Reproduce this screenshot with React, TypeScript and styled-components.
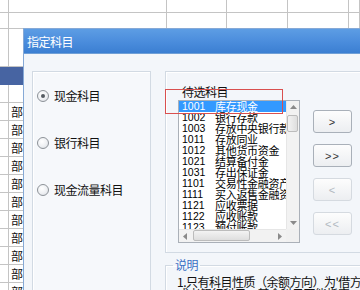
import React from "react";
import styled, { createGlobalStyle } from "styled-components";

const GlobalStyle = createGlobalStyle`
  html, body { margin: 0; padding: 0; background: #fff; }
  body {
    width: 360px; height: 290px; overflow: hidden;
    font-family: "Noto Sans CJK SC", "Liberation Sans", sans-serif;
  }
`;

const CJK = `"Noto Sans CJK SC", "Liberation Sans", sans-serif`;

const Screen = styled.div`
  position: relative;
  width: 360px;
  height: 290px;
  overflow: hidden;
  background: #fff;
`;

/* ---------- spreadsheet behind the dialog ---------- */
const Sheet = styled.div`
  display: flex;
  flex-direction: column;
`;

const HeaderRow = styled.div<{ $h: number }>`
  display: grid;
  grid-template-columns: 9px 158px 60px 61px 61px 1fr;
  height: ${(p) => p.$h}px;
`;

const GridCell = styled.div`
  box-sizing: border-box;
  border-right: 1px solid #c4c4c4;
  border-bottom: 1px solid #c4c4c4;
`;

const SideRow = styled.div<{ $h: number; $selected?: boolean }>`
  display: grid;
  grid-template-columns: 9px 15px;
  height: ${(p) => p.$h}px;
  background: ${(p) => (p.$selected ? "#4764a2" : "#fff")};
`;

const SideCell = styled.div<{ $selected?: boolean }>`
  box-sizing: border-box;
  border-right: 1px solid ${(p) => (p.$selected ? "#4764a2" : "#c4c4c4")};
  border-bottom: 1px solid ${(p) => (p.$selected ? "#4764a2" : "#c4c4c4")};
  font: 12px/17px ${CJK};
  color: #111;
  padding-left: 2px;
  overflow: hidden;
  white-space: nowrap;
`;

/* ---------- dialog ---------- */
const Dialog = styled.div`
  position: absolute;
  left: 23px;
  top: 28px;
  width: 380px;
  height: 300px;
  box-sizing: border-box;
  border: 1px solid #86a9d6;
  background: #f3f6fa;
  display: flex;
  flex-direction: column;
`;

const TitleBar = styled.div`
  height: 24px;
  flex: none;
  display: flex;
  align-items: center;
  padding-left: 3px;
  background: linear-gradient(#5d9de4 0%, #4a8cdc 55%, #3b7fd2 100%);
  color: #fff;
  font: 12px ${CJK};
  letter-spacing: -0.5px;
  border-bottom: 1px solid #6f9fd6;
`;

const Body = styled.div`
  flex: 1;
  display: flex;
  gap: 14px;
  padding: 17px 0 0 8px;
`;

const LeftGroup = styled.div`
  width: 119px;
  flex: none;
  box-sizing: border-box;
  border: 1px solid #d2dae3;
  box-shadow: inset 1px 1px 0 #fff;
  background: #f6f8fb;
  display: flex;
  flex-direction: column;
  gap: 33px;
  padding: 17px 0 0 4px;
`;

const RadioRow = styled.label`
  display: flex;
  align-items: center;
  gap: 5px;
  height: 14px;
  font: 12px/14px ${CJK};
  letter-spacing: -0.5px;
  color: #111;
  white-space: nowrap;
`;

const RadioCircle = styled.span<{ $checked?: boolean }>`
  position: relative;
  width: 12px;
  height: 12px;
  box-sizing: border-box;
  border-radius: 50%;
  border: 1px solid #8d9298;
  background: radial-gradient(circle at 40% 35%, #ffffff 0%, #eef0f3 55%, #d6dadf 100%);
  flex: none;
  &::after {
    content: "";
    display: ${(p) => (p.$checked ? "block" : "none")};
    position: absolute;
    left: 3px;
    top: 3px;
    width: 4px;
    height: 4px;
    border-radius: 50%;
    background: #555b62;
  }
`;

const RightColumn = styled.div`
  flex: 1;
  display: flex;
  flex-direction: column;
`;

const RightGroup = styled.div`
  position: relative;
  height: 182px;
  flex: none;
  box-sizing: border-box;
  border: 1px solid #d2dae3;
  box-shadow: inset 1px 1px 0 #fff;
  display: flex;
  padding: 13px 0 0 12px;
`;

const Highlight = styled.div`
  position: absolute;
  left: -1px;
  top: 17px;
  width: 118px;
  height: 25px;
  box-sizing: border-box;
  border: 1.5px solid #d9504f;
  pointer-events: none;
`;

const ListArea = styled.div`
  display: flex;
  flex-direction: column;
  width: 122px;
  flex: none;
`;

const ListLabel = styled.div`
  font: 12px/14px ${CJK};
  letter-spacing: -0.5px;
  color: #111;
  padding-left: 4px;
  margin-bottom: 1px;
`;

const Listbox = styled.div`
  width: 122px;
  height: 143px;
  box-sizing: border-box;
  border: 1px solid #aab0b8;
  background: #fff;
  display: grid;
  grid-template-columns: 1fr 13px;
  grid-template-rows: 1fr 13px;
`;

const Rows = styled.div`
  overflow: hidden;
`;

const Row = styled.div<{ $selected?: boolean }>`
  display: flex;
  height: 11px;
  line-height: 11px;
  padding-left: 3px;
  white-space: nowrap;
  background: ${(p) => (p.$selected ? "#3399ff" : "transparent")};
  color: ${(p) => (p.$selected ? "#fff" : "#000")};
`;

const Code = styled.span`
  width: 33px;
  flex: none;
  font: 10.5px/11px "Liberation Sans", sans-serif;
`;

const Name = styled.span`
  font: 11px/11px ${CJK};
  letter-spacing: -0.3px;
`;

const VScroll = styled.div`
  display: flex;
  flex-direction: column;
  background: #f2f2f2;
  border-left: 1px solid #e6e6e6;
`;

const HScroll = styled.div`
  display: flex;
  background: #f2f2f2;
  border-top: 1px solid #e6e6e6;
`;

const Corner = styled.div`
  background: #f0f0f0;
`;

const Arrow = styled.div`
  width: 12px;
  height: 12px;
  flex: none;
  display: flex;
  align-items: center;
  justify-content: center;
`;

const Track = styled.div<{ $vertical?: boolean }>`
  flex: 1;
  display: flex;
  flex-direction: ${(p) => (p.$vertical ? "column" : "row")};
`;

const Thumb = styled.div<{ $vertical?: boolean }>`
  box-sizing: border-box;
  border: 1px solid #bcbcbc;
  border-radius: 2px;
  background: linear-gradient(${(p) => (p.$vertical ? "90deg" : "180deg")}, #f3f3f3, #dedede);
  ${(p) =>
    p.$vertical
      ? "width: 11px; height: 17px; margin: 2px 0 0 0;"
      : "height: 11px; width: 57px; margin: 0 0 0 2px;"}
`;

const ButtonColumn = styled.div`
  display: flex;
  flex-direction: column;
  gap: 11px;
  margin-left: 13px;
  padding-top: 25px;
`;

const MoveButton = styled.button<{ $disabled?: boolean }>`
  width: 39px;
  height: 23px;
  box-sizing: border-box;
  padding: 0;
  border-radius: 3px;
  border: 1px solid ${(p) => (p.$disabled ? "#d5dae0" : "#a9b0b9")};
  background: linear-gradient(#fdfdfd, #eceef1);
  color: ${(p) => (p.$disabled ? "#b2b9c1" : "#333")};
  font: 11px "Liberation Sans", sans-serif;
  letter-spacing: 1px;
`;

const NoteBox = styled.fieldset`
  margin: 5px 0 0 0;
  min-width: 0;
  padding: 4px 0 0 11px;
  border: 1px solid #d2dae3;
  box-shadow: inset 1px 1px 0 #fff;
  flex: 1;
`;

const NoteLegend = styled.legend`
  font: 12px/14px ${CJK};
  color: #3b70c4;
  padding: 0 2px;
  margin-left: -4px;
  letter-spacing: -0.5px;
`;

const NoteLine = styled.div`
  font: 12px/12px ${CJK};
  letter-spacing: -0.5px;
  color: #111;
  white-space: nowrap;
`;

const Tri = ({ dir }: { dir: "up" | "down" | "left" | "right" }) => {
  const pts = {
    up: "0,4 3.5,0 7,4",
    down: "0,0 3.5,4 7,0",
    left: "4,0 0,3.5 4,7",
    right: "0,0 4,3.5 0,7",
  }[dir];
  const vert = dir === "up" || dir === "down";
  return (
    <svg width={vert ? 7 : 4} height={vert ? 4 : 7} viewBox={vert ? "0 0 7 4" : "0 0 4 7"}>
      <polygon points={pts} fill="#8a8a8a" />
    </svg>
  );
};

const items: [string, string][] = [
  ["1001", "库存现金"],
  ["1002", "银行存款"],
  ["1003", "存放中央银行款项"],
  ["1011", "存放同业"],
  ["1012", "其他货币资金"],
  ["1021", "结算备付金"],
  ["1031", "存出保证金"],
  ["1101", "交易性金融资产"],
  ["1111", "买入返售金融资产"],
  ["1121", "应收票据"],
  ["1122", "应收账款"],
  ["1123", "预付账款"],
];

const sideRows: { h: number; text?: string; selected?: boolean }[] = [
  { h: 38 },
  { h: 18, selected: true },
  { h: 18 },
  ...Array.from({ length: 11 }, () => ({ h: 18, text: "部" })),
];

export default function App() {
  return (
    <Screen>
      <GlobalStyle />
      <Sheet>
        {[13, 16].map((h, i) => (
          <HeaderRow key={i} $h={h}>
            {Array.from({ length: 6 }).map((_, j) => (
              <GridCell key={j} />
            ))}
          </HeaderRow>
        ))}
        {sideRows.map((r, i) => (
          <SideRow key={i} $h={r.h} $selected={r.selected}>
            <SideCell $selected={r.selected} />
            <SideCell $selected={r.selected}>{r.text}</SideCell>
          </SideRow>
        ))}
      </Sheet>

      <Dialog>
        <TitleBar>指定科目</TitleBar>
        <Body>
          <LeftGroup>
            <RadioRow>
              <RadioCircle $checked />
              现金科目
            </RadioRow>
            <RadioRow>
              <RadioCircle />
              银行科目
            </RadioRow>
            <RadioRow>
              <RadioCircle />
              现金流量科目
            </RadioRow>
          </LeftGroup>

          <RightColumn>
            <RightGroup>
              <ListArea>
                <ListLabel>待选科目</ListLabel>
                <Listbox>
                  <Rows>
                    {items.map(([c, n], i) => (
                      <Row key={c} $selected={i === 0}>
                        <Code>{c}</Code>
                        <Name>{n}</Name>
                      </Row>
                    ))}
                  </Rows>
                  <VScroll>
                    <Arrow>
                      <Tri dir="up" />
                    </Arrow>
                    <Track $vertical>
                      <Thumb $vertical />
                    </Track>
                    <Arrow>
                      <Tri dir="down" />
                    </Arrow>
                  </VScroll>
                  <HScroll>
                    <Arrow>
                      <Tri dir="left" />
                    </Arrow>
                    <Track>
                      <Thumb />
                    </Track>
                    <Arrow>
                      <Tri dir="right" />
                    </Arrow>
                  </HScroll>
                  <Corner />
                </Listbox>
              </ListArea>
              <ButtonColumn>
                <MoveButton>&gt;</MoveButton>
                <MoveButton>&gt;&gt;</MoveButton>
                <MoveButton $disabled>&lt;</MoveButton>
                <MoveButton $disabled>&lt;&lt;</MoveButton>
              </ButtonColumn>
              <Highlight />
            </RightGroup>

            <NoteBox>
              <NoteLegend>说明</NoteLegend>
              <NoteLine>1.只有科目性质（余额方向）为'借方'的科目才能指定</NoteLine>
              <NoteLine>或者银行科目，其余科目不能指定</NoteLine>
            </NoteBox>
          </RightColumn>
        </Body>
      </Dialog>
    </Screen>
  );
}
